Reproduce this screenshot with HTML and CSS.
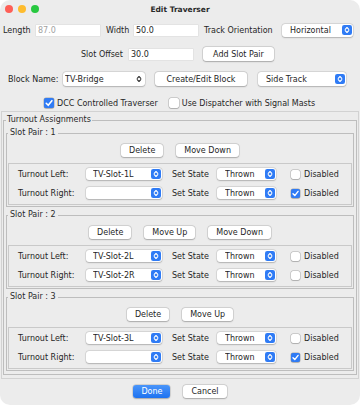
FILE: index.html
```html
<!DOCTYPE html>
<html lang="en">
<head>
    <meta charset="UTF-8">
    <meta name="viewport" content="width=device-width, initial-scale=1.0">
    <title>Edit Traverser</title>
    <link rel="stylesheet" href="styles.css">
</head>
<body>
<div class="window">
    <div class="titlebar">
        <div class="lights">
            <i class="light red"></i>
            <i class="light yellow"></i>
            <i class="light green"></i>
        </div>
        <div class="title">Edit Traverser</div>
        <div class="spacer"></div>
    </div>

    <div class="row row1">
        <span class="lbl w-length">Length</span>
        <input class="field muted" value="87.0">
        <span class="lbl w-width">Width</span>
        <input class="field" value="50.0">
        <span class="lbl w-orient">Track Orientation</span>
        <div class="select w-horiz"><span class="sel-text">Horizontal</span><svg class="stepper" viewBox="0 0 10 10"><rect width="10" height="10" rx="2.2"/><path d="M3.2 4.3 5 2.5 6.8 4.3M3.2 5.7 5 7.5 6.8 5.7"/></svg></div>
    </div>

    <div class="row row2">
        <span class="lbl w-offset">Slot Offset</span>
        <input class="field" value="30.0">
        <button class="btn btn-top w-addpair">Add Slot Pair</button>
    </div>

    <div class="row row3">
        <span class="lbl w-block">Block Name:</span>
        <div class="select select-top w-bridge tight"><span class="sel-text">TV-Bridge</span><svg class="stepper plain" viewBox="0 0 10 10"><path d="M3.2 4.3 5 2.5 6.8 4.3M3.2 5.7 5 7.5 6.8 5.7"/></svg></div>
        <button class="btn btn-top w-create">Create/Edit Block</button>
        <div class="select select-top w-side"><span class="sel-text">Side Track</span><svg class="stepper" viewBox="0 0 10 10"><rect width="10" height="10" rx="2.2"/><path d="M3.2 4.3 5 2.5 6.8 4.3M3.2 5.7 5 7.5 6.8 5.7"/></svg></div>
    </div>

    <div class="row row4">
        <span class="check on"><svg viewBox="0 0 9 9"><path d="M2 4.7 3.8 6.6 7.1 2.4"/></svg></span>
        <span class="check-label">DCC Controlled Traverser</span>
        <span class="check dispatcher"></span>
        <span class="check-label">Use Dispatcher with Signal Masts</span>
    </div>

    <div class="scroll">
        <fieldset class="assign">
            <legend>Turnout Assignments</legend>

            <fieldset class="slot">
                <legend>Slot Pair : 1</legend>
                <div class="btn-row">
                    <button class="btn">Delete</button>
                    <button class="btn">Move Down</button>
                </div>
                <div class="turnouts">
                    <div class="turnout-row">
                        <span class="t-label">Turnout Left:</span>
                        <div class="select w-turnout"><span class="sel-text">TV-Slot-1L</span><svg class="stepper" viewBox="0 0 10 10"><rect width="10" height="10" rx="2.2"/><path d="M3.2 4.3 5 2.5 6.8 4.3M3.2 5.7 5 7.5 6.8 5.7"/></svg></div>
                        <span class="s-label">Set State</span>
                        <div class="select w-state"><span class="sel-text">Thrown</span><svg class="stepper" viewBox="0 0 10 10"><rect width="10" height="10" rx="2.2"/><path d="M3.2 4.3 5 2.5 6.8 4.3M3.2 5.7 5 7.5 6.8 5.7"/></svg></div>
                        <span class="check small"></span>
                        <span class="check-label">Disabled</span>
                    </div>
                    <div class="turnout-row">
                        <span class="t-label">Turnout Right:</span>
                        <div class="select w-turnout"><span class="sel-text"></span><svg class="stepper" viewBox="0 0 10 10"><rect width="10" height="10" rx="2.2"/><path d="M3.2 4.3 5 2.5 6.8 4.3M3.2 5.7 5 7.5 6.8 5.7"/></svg></div>
                        <span class="s-label">Set State</span>
                        <div class="select w-state"><span class="sel-text">Thrown</span><svg class="stepper" viewBox="0 0 10 10"><rect width="10" height="10" rx="2.2"/><path d="M3.2 4.3 5 2.5 6.8 4.3M3.2 5.7 5 7.5 6.8 5.7"/></svg></div>
                        <span class="check small on"><svg viewBox="0 0 9 9"><path d="M2 4.7 3.8 6.6 7.1 2.4"/></svg></span>
                        <span class="check-label">Disabled</span>
                    </div>
                </div>
            </fieldset>

            <fieldset class="slot">
                <legend>Slot Pair : 2</legend>
                <div class="btn-row">
                    <button class="btn">Delete</button>
                    <button class="btn">Move Up</button>
                    <button class="btn">Move Down</button>
                </div>
                <div class="turnouts">
                    <div class="turnout-row">
                        <span class="t-label">Turnout Left:</span>
                        <div class="select w-turnout"><span class="sel-text">TV-Slot-2L</span><svg class="stepper" viewBox="0 0 10 10"><rect width="10" height="10" rx="2.2"/><path d="M3.2 4.3 5 2.5 6.8 4.3M3.2 5.7 5 7.5 6.8 5.7"/></svg></div>
                        <span class="s-label">Set State</span>
                        <div class="select w-state"><span class="sel-text">Thrown</span><svg class="stepper" viewBox="0 0 10 10"><rect width="10" height="10" rx="2.2"/><path d="M3.2 4.3 5 2.5 6.8 4.3M3.2 5.7 5 7.5 6.8 5.7"/></svg></div>
                        <span class="check small"></span>
                        <span class="check-label">Disabled</span>
                    </div>
                    <div class="turnout-row">
                        <span class="t-label">Turnout Right:</span>
                        <div class="select w-turnout"><span class="sel-text">TV-Slot-2R</span><svg class="stepper" viewBox="0 0 10 10"><rect width="10" height="10" rx="2.2"/><path d="M3.2 4.3 5 2.5 6.8 4.3M3.2 5.7 5 7.5 6.8 5.7"/></svg></div>
                        <span class="s-label">Set State</span>
                        <div class="select w-state"><span class="sel-text">Thrown</span><svg class="stepper" viewBox="0 0 10 10"><rect width="10" height="10" rx="2.2"/><path d="M3.2 4.3 5 2.5 6.8 4.3M3.2 5.7 5 7.5 6.8 5.7"/></svg></div>
                        <span class="check small"></span>
                        <span class="check-label">Disabled</span>
                    </div>
                </div>
            </fieldset>

            <fieldset class="slot">
                <legend>Slot Pair : 3</legend>
                <div class="btn-row">
                    <button class="btn">Delete</button>
                    <button class="btn">Move Up</button>
                </div>
                <div class="turnouts">
                    <div class="turnout-row">
                        <span class="t-label">Turnout Left:</span>
                        <div class="select w-turnout"><span class="sel-text">TV-Slot-3L</span><svg class="stepper" viewBox="0 0 10 10"><rect width="10" height="10" rx="2.2"/><path d="M3.2 4.3 5 2.5 6.8 4.3M3.2 5.7 5 7.5 6.8 5.7"/></svg></div>
                        <span class="s-label">Set State</span>
                        <div class="select w-state"><span class="sel-text">Thrown</span><svg class="stepper" viewBox="0 0 10 10"><rect width="10" height="10" rx="2.2"/><path d="M3.2 4.3 5 2.5 6.8 4.3M3.2 5.7 5 7.5 6.8 5.7"/></svg></div>
                        <span class="check small"></span>
                        <span class="check-label">Disabled</span>
                    </div>
                    <div class="turnout-row">
                        <span class="t-label">Turnout Right:</span>
                        <div class="select w-turnout"><span class="sel-text"></span><svg class="stepper" viewBox="0 0 10 10"><rect width="10" height="10" rx="2.2"/><path d="M3.2 4.3 5 2.5 6.8 4.3M3.2 5.7 5 7.5 6.8 5.7"/></svg></div>
                        <span class="s-label">Set State</span>
                        <div class="select w-state"><span class="sel-text">Thrown</span><svg class="stepper" viewBox="0 0 10 10"><rect width="10" height="10" rx="2.2"/><path d="M3.2 4.3 5 2.5 6.8 4.3M3.2 5.7 5 7.5 6.8 5.7"/></svg></div>
                        <span class="check small on"><svg viewBox="0 0 9 9"><path d="M2 4.7 3.8 6.6 7.1 2.4"/></svg></span>
                        <span class="check-label">Disabled</span>
                    </div>
                </div>
            </fieldset>
        </fieldset>
    </div>

    <div class="footer">
        <button class="btn btn-primary">Done</button>
        <button class="btn">Cancel</button>
    </div>
</div>
</body>
</html>
```

FILE: styles.css
```css
body{
    margin: 0;
    background-color: white;
    font-family: "DejaVu Sans", "Noto Sans", sans-serif;
    font-size: 8px;
    color: #262626;
}
.window{
    width: 360px;
    height: 405px;
    background-color: #ececec;
    border-radius: 10px;
    overflow: hidden;
}

/* title bar */
.titlebar{
    display: flex;
    align-items: center;
    height: 18px;
}
.lights{
    display: flex;
    gap: 5px;
    width: 39px;
    padding-left: 5px;
    box-sizing: border-box;
}
.light{
    width: 8px;
    height: 8px;
    border-radius: 50%;
}
.red{ background-color: #fe5f57; }
.yellow{ background-color: #febc2e; }
.green{ background-color: #28c840; }
.title{
    flex: 1;
    text-align: center;
    font-weight: bold;
    font-size: 7.5px;
    color: #2a2a2a;
}
.spacer{
    width: 39px;
}

/* top rows */
.row{
    display: flex;
    align-items: center;
    height: 16px;
}
.row1{ margin-top: 4px; padding-left: 3px; }
.row2{ margin-top: 8px; padding-left: 81px; }
.row3{ margin-top: 9px; padding-left: 8px; }
.row4{ margin-top: 8px; padding-left: 44px; }

.lbl{
    white-space: nowrap;
}
.w-length{ width: 33px; }
.w-width{ width: 28px; margin-left: 6px; }
.w-orient{ width: 78px; margin-left: 6px; }
.w-offset{ width: 48px; }
.w-block{ width: 55px; }

.field{
    width: 64px;
    height: 11px;
    box-sizing: border-box;
    border: 0px;
    padding: 0px 0px 0px 2px;
    margin: 0px;
    background-color: white;
    font: inherit;
    color: #1e1e1e;
    box-shadow: 0 0 0 0.5px #dadada;
    outline: none;
}
.muted{
    color: #a2a2a2;
}

/* buttons */
.btn{
    height: 13px;
    padding: 0px 8px;
    border: 0px;
    border-radius: 3px;
    background-color: white;
    font: inherit;
    color: #262626;
    box-shadow: 0 0 0 0.5px rgba(0,0,0,0.16), 0 0.5px 1.5px rgba(0,0,0,0.22);
    white-space: nowrap;
}
.btn-top{
    height: 14px;
}
.w-addpair{ width: 71px; margin-left: 10px; padding: 0px; }
.w-create{ width: 92px; margin-left: 10px; padding: 0px; }
.btn-primary{
    background: linear-gradient(#4a95fa, #1d72f0);
    color: white;
}

/* popup selects */
.select{
    display: flex;
    align-items: center;
    height: 12px;
    box-sizing: border-box;
    padding-left: 8px;
    background-color: white;
    border-radius: 3px;
    box-shadow: 0 0 0 0.5px rgba(0,0,0,0.12), 0 0.5px 1.5px rgba(0,0,0,0.2);
}
.select-top{
    height: 14px;
}
.row1 .select{
    height: 13px;
}
.sel-text{
    flex: 1;
    white-space: nowrap;
    overflow: hidden;
}
.tight{ padding-left: 2px; }
.stepper{
    width: 10px;
    height: 10px;
    margin-right: 1px;
    flex: none;
}
.stepper rect{
    fill: #2f7bf5;
}
.stepper path{
    fill: none;
    stroke: white;
    stroke-width: 1.1;
    stroke-linecap: round;
    stroke-linejoin: round;
}
.stepper.plain path{
    stroke: #333;
}
.w-horiz{ width: 71px; }
.w-bridge{ width: 82px; }
.w-side{ width: 88px; margin-left: 11px; }
.w-turnout{ width: 76px; padding-left: 7px; }
.w-state{ width: 59px; }

/* checkboxes */
.check{
    display: inline-flex;
    width: 10px;
    height: 10px;
    box-sizing: border-box;
    border-radius: 2px;
    background-color: white;
    box-shadow: 0 0 0 0.5px rgba(0,0,0,0.25), 0 0.5px 1px rgba(0,0,0,0.15);
    flex: none;
}
.check svg{
    width: 100%;
    height: 100%;
}
.check path{
    fill: none;
    stroke: white;
    stroke-width: 1.4;
    stroke-linecap: round;
    stroke-linejoin: round;
}
.check.on{
    background-color: #2f7bf5;
}
.check.small{
    width: 9px;
    height: 9px;
    margin-left: 15px;
}
.check-label{
    margin-left: 3px;
    white-space: nowrap;
}
.dispatcher{
    margin-left: 11px;
}

/* turnout assignments */
.scroll{
    margin: 0px 1px;
    padding: 2px 1px 3px 1px;
    border: 1px solid #d2d2d2;
}
fieldset{
    margin: 0px;
    min-width: 0px;
    border: 1px solid #bdbdbd;
}
legend{
    line-height: 12px;
    padding: 0px 1px;
    color: #2a2a2a;
}
.assign{
    padding: 0px 2px 3px 2px;
}
.slot{
    margin-top: 2px;
    padding: 0px 1px 1px 1px;
}
.slot legend{
    padding: 0px 2px;
}
.assign legend + .slot{
    margin-top: 1px;
}
.btn-row{
    display: flex;
    justify-content: center;
    gap: 13px;
    margin-top: 5px;
}
.turnouts{
    margin-top: 6px;
    padding: 4px 0px 5px 9px;
    border: 1px solid #c9c9c9;
}
.turnout-row{
    display: flex;
    align-items: center;
    height: 12px;
}
.turnout-row + .turnout-row{
    margin-top: 7px;
}
.t-label{
    width: 68px;
    white-space: nowrap;
}
.s-label{
    width: 45px;
    margin-left: 10px;
    white-space: nowrap;
}
.turnout-row .check-label{
    margin-left: 4px;
}

/* bottom buttons */
.footer{
    display: flex;
    justify-content: center;
    gap: 13px;
    margin-top: 6px;
}
```
